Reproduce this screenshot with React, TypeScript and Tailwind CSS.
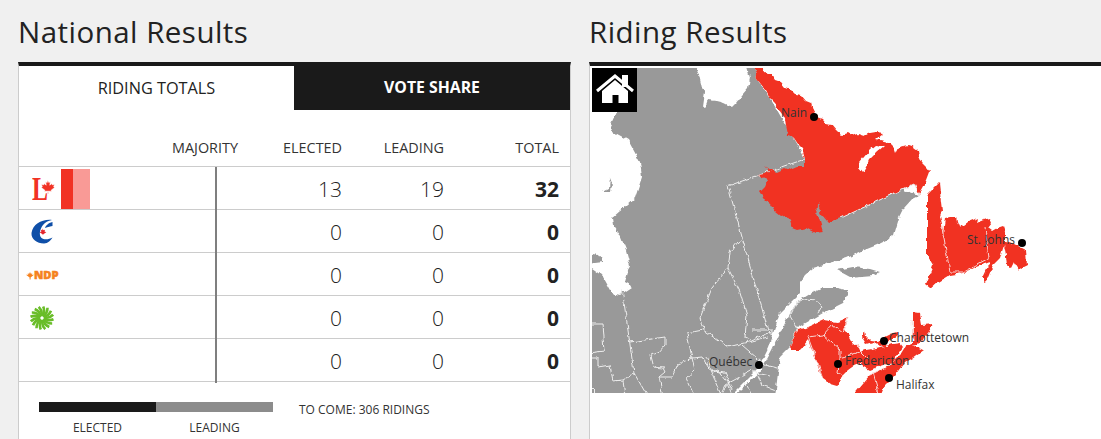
const parties = [
  { id: "lib", elected: 13, leading: 19, total: 32 },
  { id: "con", elected: 0, leading: 0, total: 0 },
  { id: "ndp", elected: 0, leading: 0, total: 0 },
  { id: "grn", elected: 0, leading: 0, total: 0 },
  { id: "oth", elected: 0, leading: 0, total: 0 },
];

const RED = "#f13224";
const GRAY = "#999999";

function LiberalLogo() {
  return (
    <svg width="24" height="36" viewBox="0 -6 24 36" className="block">
      <text x="0" y="22.500" fontSize="33" fontWeight="700" fill={RED} textLength="16" lengthAdjust="spacingAndGlyphs" fontFamily="'Liberation Serif', serif">
        L
      </text>
      <path
        d="M15.500 3l1.300 2.600 1.500-.8-.5 3.400 1.800-1.700.5 1.300 2.400-.4-.8 2.400 1 .6-3.600 2.900.4 1.200-3.200-.4.1 3h-.8l.1-3-3.200.4.4-1.200-3.600-2.900 1-.6-.8-2.400 2.400.4.5-1.300 1.800 1.700-.5-3.400 1.500.8z"
        fill={RED}
        stroke="#fff"
        strokeWidth="0.6"
      />
    </svg>
  );
}

function ConservativeLogo() {
  return (
    <svg width="24" height="26" viewBox="6 4 24 26" className="block">
      <path
        d="M28 5C18 4 9 9 7.500 18C7 24 13 28.500 20 28.500C24 28.500 27 25 28.500 22.500C25 24.500 20 25 17.500 23C14.500 20 16 14 19 10C21 7.500 24 5.500 28 5z"
        fill="#0f4fa8"
      />
      <path d="M28.500 7C24 8 21.500 11 21 13C24 11.500 27 11.500 28.500 11z" fill="#0f4fa8" />
      <path d="M18.500 13.500l1 1.800 1.500-.5-.5 1.800 1.800.6-3 2-.3 1-.4-1-3-2 1.800-.6-.5-1.800 1.500.5z" fill="#e4252c" />
    </svg>
  );
}

function NdpLogo() {
  return (
    <svg width="33" height="18" viewBox="0 -4 33 18" className="block">
      <path d="M0 4.800h2.400L1.600 3.400l1.600.4L4 2l.8 1.800 1.600-.4-.8 1.400H8L4.600 7.600V9.500h-1V7.600z" fill="#f58220" />
      <text
        x="8"
        y="9"
        fontSize="10.500"
        fontWeight="800"
        fill="#f58220"
        stroke="#f58220"
        strokeWidth="0.5"
        textLength="24.500"
        lengthAdjust="spacingAndGlyphs"
        fontFamily="'Open Sans', sans-serif"
      >
        NDP
      </text>
    </svg>
  );
}

function GreenLogo() {
  const blades = Array.from({ length: 16 }, (_, i) => i * 22.5);
  return (
    <svg width="24" height="24" viewBox="-12 -12 24 24" className="block">
      {blades.map((a) => (
        <path key={a} d="M0 -2Q3.500 -6 1.200 -11.500" fill="none" stroke="#69bd28" strokeWidth="2.600" transform={`rotate(${a})`} />
      ))}
      <circle r="1.500" fill="#fff" />
    </svg>
  );
}

function PartyLogo({ id }: { id: string }) {
  if (id === "lib") {
    return (
      <div className="flex h-full items-center">
        <div className="ml-[13px] w-[29px]">
          <LiberalLogo />
        </div>
        <div className="flex h-[40px] w-[29px]">
          <div className="w-[12px] bg-[#f13224]" />
          <div className="w-[17px] bg-[#f99a96]" />
        </div>
      </div>
    );
  }
  if (id === "con") return <div className="ml-[11px] flex h-full items-center"><ConservativeLogo /></div>;
  if (id === "ndp") return <div className="ml-[7px] flex h-full items-center"><NdpLogo /></div>;
  if (id === "grn") return <div className="ml-[11px] flex h-full items-center"><GreenLogo /></div>;
  return null;
}

function RidingMap() {
  const lines = [
    "622,288 634,373",
    "588,324 602,324 604,351 588,353",
    "588,358 598,358 598,367 610,365 613,381 623,380 634,373 648,397",
    "630,342 665,337 665,345 658,353 650,355 653,367 663,368 665,372 659,377",
    "742,237 730,252 728,268 712,288 700,318 703,330",
    "728,268 740,292 747,315 745,338 750,340 772,332",
    "687,333 703,330 728,347 768,337",
    "687,333 692,358",
    "752,330 772,330 772,336",
    "742,345 765,365 778,368",
    "659,377 672,377 678,364 692,358 702,357 710,370 725,373 732,390",
    "623,380 625,397",
    "659,377 663,397",
    "692,358 695,370 686,378 695,397",
    "706,357 712,372 718,370 726,380 733,397",
    "710,370 722,397",
    "725,385 738,378 752,370",
    "719,397 725,385",
    "745,382 752,397",
    "752,372 770,376",
    "758,375 762,385 775,390",
    "728,186 805,159",
    "728,186 742,237 768,330",
    "588,385 600,397",
    "797,302 808,299 815,300 822,306 818,313",
    "797,302 790,316 797,328",
  ];
  const redLines = [
    "808,337 823,335 832,325 843,333 848,318",
    "808,337 823,378",
    "823,335 840,350 840,358 850,355 860,352",
    "840,358 838,372 845,378",
    "860,352 868,360",
    "870,375 880,370 890,365",
    "873,372 880,397",
    "912,320 913,340",
    "942,228 950,272 963,272 989,258 985,227",
  ];

  return (
    <svg viewBox="592 68 509 325" width="509" height="325" className="block">
      <defs>
        <filter id="coast" x="-5%" y="-5%" width="110%" height="110%">
          <feTurbulence type="fractalNoise" baseFrequency="0.16" numOctaves="2" seed="4" />
          <feDisplacementMap in="SourceGraphic" scale="5" xChannelSelector="R" yChannelSelector="G" />
        </filter>
      </defs>

      <g filter="url(#coast)">
        {/* Quebec */}
        <polygon
          fill={GRAY}
          points="588,397 588,266 592,268 602,275 612,293 620,295 632,287 625,283 630,265 626,250 620,235 613,225 612,218 635,198 642,177 640,162 628,140 610,130 610,127 617,112 617,100 637,64 694,64 699,75 702,88 705,92 703,107 706,106 708,100 716,101 724,103 732,107 736,103 742,95 748,88 750,78 746,64 753,64 757,78 770,98 805,158 919,195 913,198 904,208 899,218 894,235 887,240 877,245 862,251 847,258 823,265 813,268 805,275 800,282 800,293 790,303 780,313 768,348 758,368 729,397"
        />
        <polygon
          fill={GRAY}
          points="732,397 760,372 772,350 785,322 797,302 810,294 823,288 838,288 847,290 848,295 843,303 823,313 797,328 790,347 780,357 775,397"
        />
        <polygon fill={GRAY} points="837,270 853,267 870,269 880,272 873,275 850,277" />
        <polygon fill={GRAY} points="588,253 598,255 603,262 588,264" />
        <polygon fill={GRAY} points="603,192 609,189 610,178 612,183 611,192" />
        {lines.map((p) => (
          <polyline key={p} points={p} fill="none" stroke="#eeeeee" strokeWidth="1" />
        ))}

        {/* Labrador */}
        <polygon
          fill={RED}
          points="753,64 762,64 765,72 771,74 775,80 781,82 785,87 790,89 795,94 801,95 806,101 811,103 813,110 817,117 822,119 826,124 832,125 837,131 842,135 848,133 853,136 858,134 864,136 870,133 876,132 884,133 876,140 888,143 890,143 894,147 896,153 899,147 903,146 908,145 914,147 918,150 919,156 922,163 926,167 930,172 927,180 923,188 919,195 914,184 841,218 828,222 821,214 818,208 821,203 815,208 818,215 823,232 815,233 806,228 797,230 792,228 790,221 785,215 780,216 775,212 770,204 765,200 760,192 765,187 768,180 763,178 758,175 765,174 770,172 767,168 765,166 771,170 777,172 785,168 790,170 797,167 805,167 805,158 802,148 797,143 793,137 788,135 786,125 785,118 779,110 775,103 770,98 766,90 760,82 757,78"
        />
        <polygon fill="#fff" points="859,167 863,172 866,167 869,160 876,153 884,146 876,145 870,150 864,157 860,162" />
        <polyline points="841,218 914,184 919,195" fill="none" stroke="#eeeeee" strokeWidth="1" />

        {/* Newfoundland */}
        <polygon
          fill={RED}
          points="927,195 932,190 939,183 940,192 941,202 942,210 940,216 942,225 943,235 944,225 945,218 950,217 956,217 957,222 959,227 964,225 968,222 973,220 977,218 976,223 980,221 984,220 990,218 992,223 988,228 992,231 997,228 1003,226 1005,232 1005,242 1000,258 993,265 987,280 983,282 983,277 990,262 982,265 973,268 963,273 950,275 937,283 930,289 925,285 932,268 933,265 927,255 927,225 927,210"
        />
        <polygon
          fill={RED}
          points="1003,240 1012,243 1020,247 1026,250 1027,265 1021,268 1019,270 1014,262 1011,268 1007,266 1006,256"
        />

        {/* Maritimes */}
        <polygon
          fill={RED}
          points="790,347 795,335 797,330 805,328 823,320 830,321 838,322 848,318 846,325 843,328 848,335 852,342 858,347 860,352 866,350 872,349 868,357 862,362 855,365 848,370 843,375 840,383 837,385 830,383 823,378 820,372 812,350 808,340 800,350 792,350"
        />
        <polygon fill={RED} points="851,397 862,384 870,375 880,370 890,365 900,355 905,347 908,345 915,346 923,350 912,358 905,362 895,375 885,385 880,397" />
        <polygon fill={RED} points="863,366 860,358 865,353 872,350 884,347 893,344 900,343 903,347 897,355 893,362 880,366 870,370" />
        <polygon fill={RED} points="912,340 913,326 913,312 920,313 922,325 933,324 927,335 917,345 912,346" />
        <polygon fill={RED} points="862,337 865,331 866,336 870,340 878,341 885,337 893,333 897,332 897,337 887,342 886,346 880,347 873,342 866,344" />
        {redLines.map((p) => (
          <polyline key={p} points={p} fill="none" stroke="#f9d5d2" strokeWidth="1" />
        ))}
      </g>

      {/* Cities */}
      <g fill="#000">
        <circle cx="814" cy="117" r="4" />
        <circle cx="1022" cy="243" r="4" />
        <circle cx="884" cy="341" r="4" />
        <circle cx="838" cy="364" r="4" />
        <circle cx="889" cy="378" r="4" />
        <circle cx="759" cy="365" r="4" />
      </g>
      <g fill="#333" fontSize="12" fontFamily="'Open Sans', sans-serif">
        <text x="781" y="117">Nain</text>
        <text x="967" y="244">St. Johns</text>
        <text x="889" y="342">Charlottetown</text>
        <text x="845" y="365">Fredericton</text>
        <text x="896" y="389">Halifax</text>
        <text x="709" y="366">Québec</text>
      </g>
    </svg>
  );
}

export default function App() {
  return (
    <div className="flex h-[439px] w-[1101px] overflow-hidden bg-[#f0f0f0] pl-[18px] font-['Open_Sans',sans-serif] text-[#1a1a1a]">
      {/* National */}
      <div className="flex w-[553px] flex-col">
        <h2 className="h-[62px] pt-[12px] text-[29.500px] font-medium leading-[40px] tracking-[0.47px] text-[#222]">National Results</h2>
        <div className="flex flex-1 flex-col border-x border-[#ccc] border-t-4 border-t-[#1a1a1a] bg-white">
          <div className="flex h-[44px]">
            <div className="flex w-[275px] items-center justify-center text-[16.300px] text-[#222]">RIDING TOTALS</div>
            <div className="flex flex-1 items-center justify-center bg-[#1a1a1a] text-[15.800px] font-bold text-white">VOTE SHARE</div>
          </div>

          <div className="grid h-[56px] grid-cols-[219px_104px_102px_115px] items-end pb-[9px] text-right text-[14.400px] leading-[18px] text-[#333]">
            <div>MAJORITY</div>
            <div>ELECTED</div>
            <div>LEADING</div>
            <div>TOTAL</div>
          </div>

          <div className="border-t border-[#ccc]">
            {parties.map((p) => (
              <div key={p.id} className="grid h-[43px] grid-cols-[198px_125px_102px_115px] border-b border-[#ccc] text-right text-[21px] font-light leading-[44px] text-[#222]">
                <div className="h-full border-r-2 border-[#7f7f7f] text-left">
                  <PartyLogo id={p.id} />
                </div>
                <div>{p.elected}</div>
                <div>{p.leading}</div>
                <div className="font-bold text-[#222]">{p.total}</div>
              </div>
            ))}
          </div>

          <div className="flex pl-[20px] pt-[20px]">
            <div className="w-[234px]">
              <div className="flex h-[10px]">
                <div className="w-1/2 bg-[#1a1a1a]" />
                <div className="w-1/2 bg-[#8c8c8c]" />
              </div>
              <div className="mt-[8px] flex text-center text-[12px] leading-[16px] text-[#333]">
                <div className="w-1/2">ELECTED</div>
                <div className="w-1/2">LEADING</div>
              </div>
            </div>
            <div className="ml-[26px] text-[12px] leading-[16px] text-[#333]">TO COME: 306 RIDINGS</div>
          </div>
        </div>
      </div>

      {/* Riding */}
      <div className="ml-[18px] flex flex-1 flex-col">
        <h2 className="h-[62px] pt-[12px] text-[29.500px] font-medium leading-[40px] tracking-[0.47px] text-[#222]">Riding Results</h2>
        <div className="relative flex-1 border-l border-[#ccc] border-t-4 border-t-[#1a1a1a] bg-white pl-[2px] pt-[2px]">
          <RidingMap />
          <div className="absolute left-[2px] top-[2px] flex h-[44px] w-[45px] items-center justify-center bg-black">
            <svg viewBox="0 0 45 44" width="45" height="44">
              <path d="M30 7h6v12h-6z" fill="#fff" />
              <path d="M5 23L23 8l18 15" fill="none" stroke="#fff" strokeWidth="3" />
              <path fillRule="evenodd" d="M10 23L23 12l13 11v12H10zM20.500 27v8h6v-8z" fill="#fff" />
            </svg>
          </div>
        </div>
      </div>
    </div>
  );
}
